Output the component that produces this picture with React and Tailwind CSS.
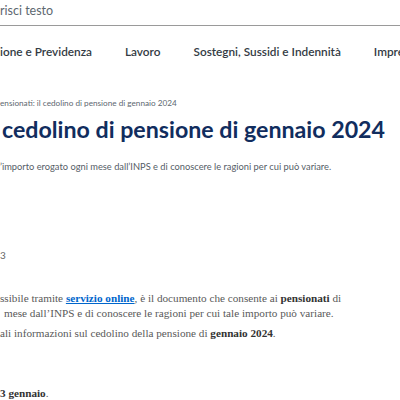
export default function App() {
  const sans = { fontFamily: "Lato, 'Open Sans', sans-serif" };
  const serif = { fontFamily: "'Liberation Serif', 'DejaVu Serif', serif" };
  return (
    <div className="w-[400px] h-[400px] overflow-hidden bg-white relative" style={sans}>
      <div className="h-[26px] border-b border-[#9a9a9a] pt-[3px]">
        <div className="text-[12.5px] leading-[16px] text-[#5d6770] whitespace-nowrap">risci testo</div>
      </div>
      <nav className="mt-[18px] flex gap-[33px] text-[11.8px] leading-[16px] font-semibold text-[#333b44] whitespace-nowrap">
        <span>ione e Previdenza</span>
        <span>Lavoro</span>
        <span>Sostegni, Sussidi e Indennità</span>
        <span>Imprese e Liberi Professionisti</span>
      </nav>
      <div className="mt-[37px] text-[8.2px] leading-[12px] text-[#5d6770] whitespace-nowrap">
        ensionati: il cedolino di pensione di gennaio 2024
      </div>
      <h1 className="mt-[5px] ml-[2px] text-[23.2px] leading-[30px] font-bold text-[#112d5e] whitespace-nowrap">
        cedolino di pensione di gennaio 2024
      </h1>
      <p className="mt-[16px] text-[9.3px] leading-[14px] text-[#555d66] whitespace-nowrap">
        ’importo erogato ogni mese dall’INPS e di conoscere le ragioni per cui può variare.
      </p>
      <div className="mt-[74px] text-[10px] leading-[14px] text-[#666] whitespace-nowrap">3</div>
      <div className="mt-[29px] text-[11.2px] leading-[15px] text-[#595959] whitespace-nowrap" style={serif}>
        <p>
          ssibile tramite{" "}
          <a className="text-[#0066cc] font-bold underline">servizio online</a>, è il documento che consente ai{" "}
          <b className="text-[#333]">pensionati</b> di
        </p>
        <p className="pl-[4px]">mese dall’INPS e di conoscere le ragioni per cui tale importo può variare.</p>
        <p className="mt-[5px]">
          ali informazioni sul cedolino della pensione di <b className="text-[#333]">gennaio 2024</b>.
        </p>
        <p className="mt-[45px]">
          <b className="text-[#333]">3 gennaio</b>.
        </p>
      </div>
    </div>
  );
}
